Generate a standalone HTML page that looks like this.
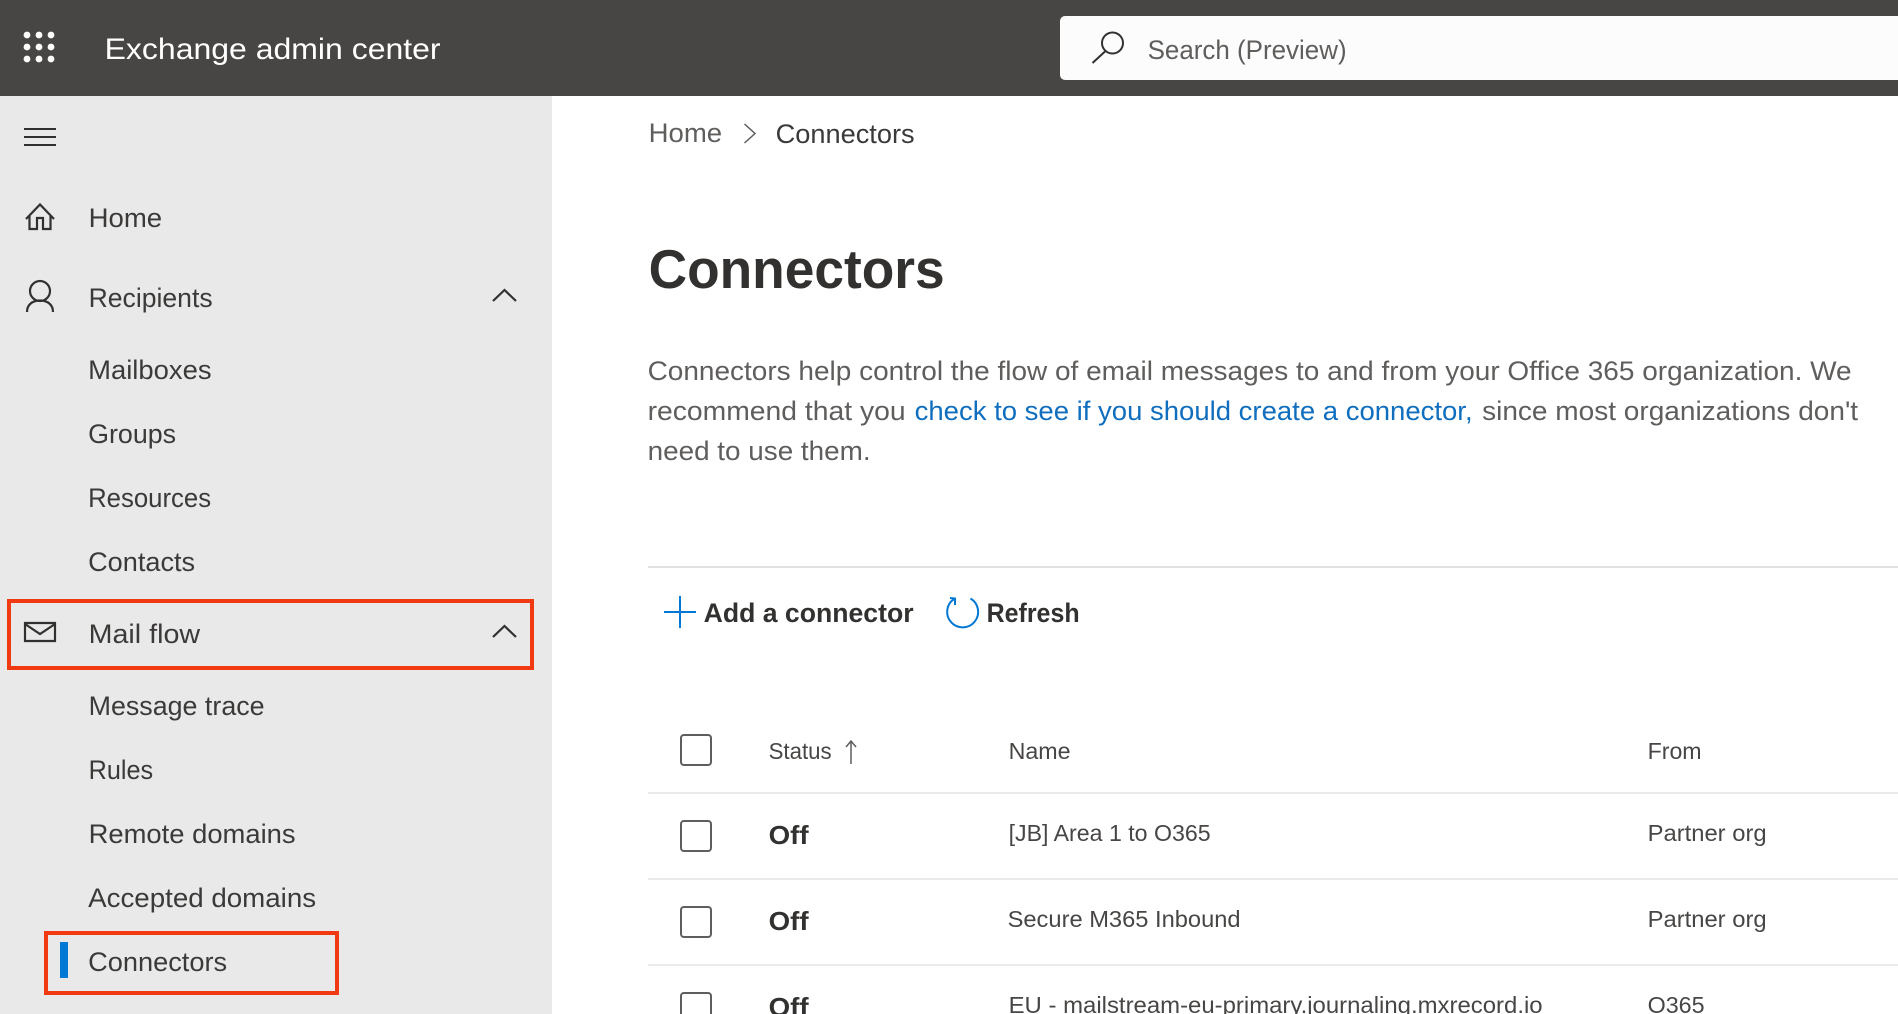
<!DOCTYPE html>
<html lang="en">
<head>
<meta charset="utf-8">
<title>Exchange admin center - Connectors</title>
<style>
html,body{margin:0;padding:0;width:1898px;height:1014px;overflow:hidden;background:#fff}
svg{display:block;overflow:hidden}
text{font-family:"Liberation Sans",sans-serif;transform:translate(-.4px,-.8px)}
.n{font-size:27px;fill:#3b3a39}
.p{font-size:27px;fill:#605e5c}
.l{font-size:27px;fill:#106ebe}
.t{font-size:23px;fill:#484644}
.b{font-size:26px;font-weight:700;fill:#323130}
.a{font-size:27px;font-weight:700;fill:#323130}
.ic{fill:none;stroke:#323130;stroke-width:2.2}
.cb{fill:#fff;stroke:#605e5c;stroke-width:2}
.sep{fill:#edebe9}
</style>
</head>
<body>
<svg xmlns="http://www.w3.org/2000/svg" width="1898" height="1014" viewBox="0 0 1898 1014">
<rect width="1898" height="1014" fill="#fff"/>
<rect width="552" height="918" y="96" fill="#e9e9e9"/>
<rect width="1898" height="96" fill="#484644"/>

<g fill="#fff">
<circle cx="27" cy="35" r="3.4"/><circle cx="39" cy="35" r="3.4"/><circle cx="51" cy="35" r="3.4"/>
<circle cx="27" cy="47" r="3.4"/><circle cx="39" cy="47" r="3.4"/><circle cx="51" cy="47" r="3.4"/>
<circle cx="27" cy="59" r="3.4"/><circle cx="39" cy="59" r="3.4"/><circle cx="51" cy="59" r="3.4"/>
</g>
<text x="105" y="60" font-size="30" fill="#fff" textLength="336" lengthAdjust="spacingAndGlyphs">Exchange admin center</text>

<path d="M1060 75V21a5 5 0 0 1 5-5H1898V80H1065a5 5 0 0 1-5-5z" fill="#fcfcfc"/>
<circle cx="1112.500" cy="43" r="10.500" fill="none" stroke="#323130" stroke-width="2"/>
<path d="M1105 51.500 1092.500 63" fill="none" stroke="#323130" stroke-width="2"/>
<text x="1148" y="60" class="p" textLength="199" lengthAdjust="spacingAndGlyphs">Search (Preview)</text>

<path d="M24 129H56M24 137H56M24 145H56" fill="none" stroke="#323130" stroke-width="2"/>

<path d="M26 219 40 204.500 54 219M29.500 216V229H37V218H43V229H50.500V216" class="ic"/>
<text x="89" y="228" class="n" textLength="73.500" lengthAdjust="spacingAndGlyphs">Home</text>

<circle cx="40" cy="291" r="10" class="ic"/>
<path d="M27 312C27 305 32 300.500 40 300.500S53 305 53 312" class="ic"/>
<text x="89" y="308" class="n" textLength="124" lengthAdjust="spacingAndGlyphs">Recipients</text>
<path d="M493 301 504.500 290 516 301" class="ic"/>

<text x="88.500" y="380" class="n" textLength="123.500" lengthAdjust="spacingAndGlyphs">Mailboxes</text>
<text x="88.500" y="444" class="n" textLength="88" lengthAdjust="spacingAndGlyphs">Groups</text>
<text x="88.500" y="508" class="n" textLength="123" lengthAdjust="spacingAndGlyphs">Resources</text>
<text x="88.500" y="572" class="n" textLength="107" lengthAdjust="spacingAndGlyphs">Contacts</text>

<rect x="9" y="601" width="523" height="67" fill="none" stroke="#f23a12" stroke-width="4"/>
<path d="M25 623H55V641H25ZM25 624 40 634 55 624" class="ic"/>
<text x="89" y="644" class="n" textLength="111.500" lengthAdjust="spacingAndGlyphs">Mail flow</text>
<path d="M493 637 504.500 626 516 637" class="ic"/>

<text x="89" y="716" class="n" textLength="176" lengthAdjust="spacingAndGlyphs">Message trace</text>
<text x="89" y="780" class="n" textLength="64.500" lengthAdjust="spacingAndGlyphs">Rules</text>
<text x="89" y="844" class="n" textLength="207" lengthAdjust="spacingAndGlyphs">Remote domains</text>
<text x="88.500" y="908" class="n" textLength="228" lengthAdjust="spacingAndGlyphs">Accepted domains</text>

<rect x="46" y="933" width="291" height="60" fill="none" stroke="#f23a12" stroke-width="4"/>
<rect x="60" y="942" width="8" height="36" fill="#0078d4"/>
<text x="88.500" y="972" class="n" textLength="139" lengthAdjust="spacingAndGlyphs">Connectors</text>

<text x="649" y="143" class="p" textLength="73.500" lengthAdjust="spacingAndGlyphs">Home</text>
<path d="M744.500 124 755 133.500 744.500 143" fill="none" stroke="#605e5c" stroke-width="1.500"/>
<text x="776" y="144" class="n" textLength="139" lengthAdjust="spacingAndGlyphs">Connectors</text>

<text x="649" y="289" font-size="55" font-weight="700" fill="#323130" textLength="296" lengthAdjust="spacingAndGlyphs">Connectors</text>

<text x="648" y="381" class="p" textLength="1204" lengthAdjust="spacingAndGlyphs">Connectors help control the flow of email messages to and from your Office 365 organization. We</text>
<text x="648" y="421" class="p" textLength="258" lengthAdjust="spacingAndGlyphs">recommend that you</text>
<text x="915" y="421" class="l" textLength="558" lengthAdjust="spacingAndGlyphs">check to see if you should create a connector,</text>
<text x="1482.500" y="421" class="p" textLength="376" lengthAdjust="spacingAndGlyphs">since most organizations don't</text>
<text x="648" y="461" class="p" textLength="223" lengthAdjust="spacingAndGlyphs">need to use them.</text>

<rect x="648" y="566" width="1250" height="2" fill="#e1e1e1"/>

<path d="M664 612H696M680 596V628" fill="none" stroke="#0078d4" stroke-width="2"/>
<text x="704" y="623" class="a" textLength="210" lengthAdjust="spacingAndGlyphs">Add a connector</text>
<path d="M954 599A15.500 15.500 0 1 0 970.500 598.500" fill="none" stroke="#0078d4" stroke-width="2"/>
<path d="M950 598 955 598.500 955 605" fill="none" stroke="#0078d4" stroke-width="2"/>
<text x="987" y="623" class="a" textLength="93" lengthAdjust="spacingAndGlyphs">Refresh</text>

<rect x="681" y="735" width="30" height="30" rx="3" class="cb"/>
<text x="769" y="760" class="t" textLength="63" lengthAdjust="spacingAndGlyphs">Status</text>
<path d="M851 764V741M846 747 851 741 856 747" fill="none" stroke="#605e5c" stroke-width="1.500"/>
<text x="1009" y="760" class="t" textLength="62" lengthAdjust="spacingAndGlyphs">Name</text>
<text x="1648" y="760" class="t" textLength="54" lengthAdjust="spacingAndGlyphs">From</text>
<rect x="648" y="792" width="1250" height="2" class="sep"/>

<rect x="681" y="821" width="30" height="30" rx="3" class="cb"/>
<text x="769" y="845" class="b" textLength="40" lengthAdjust="spacingAndGlyphs">Off</text>
<text x="1009" y="842" class="t" textLength="202" lengthAdjust="spacingAndGlyphs">[JB] Area 1 to O365</text>
<text x="1648" y="842" class="t" textLength="119" lengthAdjust="spacingAndGlyphs">Partner org</text>
<rect x="648" y="878" width="1250" height="2" class="sep"/>

<rect x="681" y="907" width="30" height="30" rx="3" class="cb"/>
<text x="769" y="931" class="b" textLength="40" lengthAdjust="spacingAndGlyphs">Off</text>
<text x="1008" y="928" class="t" textLength="233" lengthAdjust="spacingAndGlyphs">Secure M365 Inbound</text>
<text x="1648" y="928" class="t" textLength="119" lengthAdjust="spacingAndGlyphs">Partner org</text>
<rect x="648" y="964" width="1250" height="2" class="sep"/>

<rect x="681" y="993" width="30" height="30" rx="3" class="cb"/>
<text x="769" y="1017" class="b" textLength="40" lengthAdjust="spacingAndGlyphs">Off</text>
<text x="1009" y="1014" class="t" textLength="534" lengthAdjust="spacingAndGlyphs">EU - mailstream-eu-primary.journaling.mxrecord.io</text>
<text x="1648" y="1014" class="t" textLength="57" lengthAdjust="spacingAndGlyphs">O365</text>
</svg>
</body>
</html>
